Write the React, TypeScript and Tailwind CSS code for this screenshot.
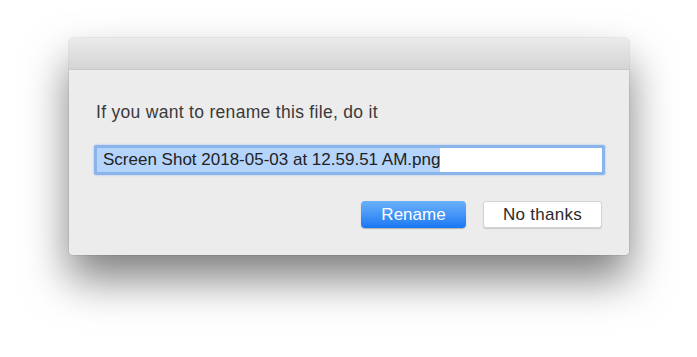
export default function App() {
  return (
    <div className="h-[357px] w-[697px] bg-white pl-[69px] pt-[38px] font-['Liberation_Sans',Arial,sans-serif]">
      <div className="flex h-[217px] w-[560px] flex-col overflow-hidden rounded-[4px] bg-[#ececec] shadow-[0_24px_44px_rgba(0,0,0,0.5),0_0_0_1px_rgba(0,0,0,0.06)]">
        <div className="h-[32px] shrink-0 border-b border-[#c9c9c9] bg-gradient-to-b from-[#ebebeb] to-[#d4d4d4]" />
        <div className="flex flex-1 flex-col px-[25px] pt-[31px]">
          <p className="pl-[2px] text-[17.5px] leading-[22px] tracking-[0.3px] text-[#3a3a3a]">If you want to rename this file, do it</p>
          <div className="mt-[22px] h-[30px] w-[511px] rounded-[2px] border-[3px] border-[#8ab4ec] bg-white shadow-[0_0_2px_rgba(80,140,230,0.6)]">
            <span className="inline-block bg-[#b5d4fb] pl-[6px] text-[17px] leading-[24px] text-[#222]">Screen Shot 2018-05-03 at 12.59.51 AM.png</span>
          </div>
          <div className="mt-[26px] flex w-[508px] justify-end gap-[17px]">
            <button className="h-[27px] w-[105px] rounded-[4px] bg-gradient-to-b from-[#6bb1fa] to-[#1677f3] text-[17px] text-white shadow-[0_1px_1px_rgba(0,0,0,0.25)]">Rename</button>
            <button className="h-[27px] w-[119px] rounded-[3px] border border-[#d4d4d4] bg-white text-[17px] tracking-[0.3px] text-[#2a2a2a] shadow-[0_1px_1px_rgba(0,0,0,0.15)]">No thanks</button>
          </div>
        </div>
      </div>
    </div>
  );
}
